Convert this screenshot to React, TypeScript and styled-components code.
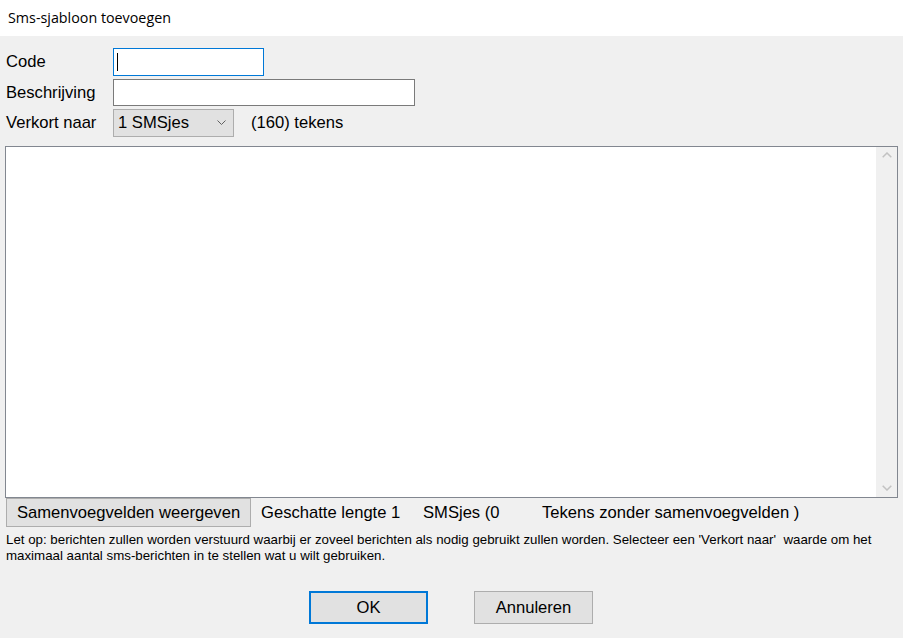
import React from "react";
import styled, { createGlobalStyle } from "styled-components";

const Global = createGlobalStyle`
  html, body { margin: 0; padding: 0; background: #f0f0f0; }
  body { font-family: "Liberation Sans", Arial, sans-serif; color: #000; }
  * { box-sizing: border-box; }
`;

const Window = styled.div`
  width: 903px;
  height: 638px;
  display: flex;
  flex-direction: column;
  background: #f0f0f0;
  overflow: hidden;
`;

const TitleBar = styled.div`
  height: 36px;
  flex: none;
  background: #fff;
  display: flex;
  align-items: center;
  padding-left: 8px;
  padding-bottom: 1px;
  font-family: "Open Sans", "Noto Sans", sans-serif;
  font-size: 14.3px;
  color: #000;
`;

const Body = styled.div`
  flex: 1;
  display: flex;
  flex-direction: column;
  padding: 12px 5px 0 5px;
`;

const FormGrid = styled.div`
  display: grid;
  grid-template-columns: 108px auto;
  row-gap: 3px;
  align-items: center;
`;

const Label = styled.label`
  font-size: 16.6px;
  padding-left: 1px;
`;

const TextInput = styled.div<{ $w: number; $focused?: boolean; $h: number }>`
  width: ${(p) => p.$w}px;
  height: ${(p) => p.$h}px;
  background: #fff;
  border: 1px solid ${(p) => (p.$focused ? "#0078d7" : "#7a7a7a")};
  display: flex;
  align-items: center;
  padding-left: 3px;
`;

const Caret = styled.span`
  width: 1px;
  height: 18px;
  background: #000;
`;

const SelectRow = styled.div`
  display: flex;
  align-items: center;
  gap: 17px;
`;

const Select = styled.div`
  width: 121px;
  height: 28px;
  background: #e1e1e1;
  border: 1px solid #adadad;
  display: flex;
  align-items: center;
  justify-content: space-between;
  padding: 0 7px 0 4px;
  font-size: 16.6px;
`;

const Chevron = styled.svg`
  width: 9px;
  height: 6px;
`;

const PlainText = styled.span`
  font-size: 16.6px;
`;

const MessageBox = styled.div`
  margin-top: 9px;
  height: 352px;
  width: 893px;
  background: #fff;
  border: 1px solid #828790;
  display: flex;
  justify-content: flex-end;
`;

const ScrollBar = styled.div`
  width: 21px;
  background: #f0f0f0;
  display: flex;
  flex-direction: column;
  justify-content: space-between;
  align-items: center;
  padding: 5px 0 6px 1px;
`;

const Arrow = styled.svg`
  width: 10px;
  height: 6px;
`;

const StatusRow = styled.div`
  display: flex;
  align-items: center;
  height: 29px;
  font-size: 16.6px;
`;

const Button = styled.button<{ $w: number; $h: number; $primary?: boolean }>`
  width: ${(p) => p.$w}px;
  height: ${(p) => p.$h}px;
  flex: none;
  background: #e1e1e1;
  border: ${(p) => (p.$primary ? "2px solid #0078d7" : "1px solid #adadad")};
  font-family: "Liberation Sans", Arial, sans-serif;
  font-size: 16.6px;
  color: #000;
  padding: 0;
  margin: 0;
  display: flex;
  align-items: center;
  justify-content: center;
`;

const WideButton = styled(Button)`
  margin-left: 1px;
`;

const StatusItem = styled.span<{ $w?: number }>`
  white-space: pre;
  ${(p) => (p.$w ? `width: ${p.$w}px; flex: none;` : "")}
`;

const StatusGroup = styled.div`
  display: flex;
  padding-left: 10px;
`;

const Note = styled.p`
  margin: 5px 0 0 1px;
  font-size: 13.3px;
  line-height: 16px;
  width: 880px;
  white-space: pre-wrap;
`;

const ButtonBar = styled.div`
  display: flex;
  margin-top: 27px;
  padding-left: 304px;
  gap: 46px;
`;

export default function App() {
  return (
    <>
      <Global />
      <Window>
        <TitleBar>Sms-sjabloon toevoegen</TitleBar>
        <Body>
          <FormGrid>
            <Label>Code</Label>
            <TextInput $w={151} $h={28} $focused>
              <Caret />
            </TextInput>
            <Label>Beschrijving</Label>
            <TextInput $w={302} $h={27} />
            <Label>Verkort naar</Label>
            <SelectRow>
              <Select>
                <span>1 SMSjes</span>
                <Chevron viewBox="0 0 9 6">
                  <path d="M0.5 0.5 L4.5 4.5 L8.5 0.5" fill="none" stroke="#606060" strokeWidth="1" />
                </Chevron>
              </Select>
              <PlainText>(160) tekens</PlainText>
            </SelectRow>
          </FormGrid>
          <MessageBox>
            <ScrollBar>
              <Arrow viewBox="0 0 10 6">
                <path d="M0.7 5.3 L5 1 L9.3 5.3" fill="none" stroke="#c2c2c2" strokeWidth="1.5" />
              </Arrow>
              <Arrow viewBox="0 0 10 6">
                <path d="M0.7 0.7 L5 5 L9.3 0.7" fill="none" stroke="#c2c2c2" strokeWidth="1.5" />
              </Arrow>
            </ScrollBar>
          </MessageBox>
          <StatusRow>
            <WideButton $w={245} $h={29}>
              Samenvoegvelden weergeven
            </WideButton>
            <StatusGroup>
              <StatusItem $w={162}>Geschatte lengte 1</StatusItem>
              <StatusItem $w={119}>SMSjes (0</StatusItem>
              <StatusItem>Tekens zonder samenvoegvelden )</StatusItem>
            </StatusGroup>
          </StatusRow>
          <Note>
            {"Let op: berichten zullen worden verstuurd waarbij er zoveel berichten als nodig gebruikt zullen worden. Selecteer een 'Verkort naar'  waarde om het maximaal aantal sms-berichten in te stellen wat u wilt gebruiken."}
          </Note>
          <ButtonBar>
            <Button $w={119} $h={33} $primary>
              OK
            </Button>
            <Button $w={119} $h={33}>
              Annuleren
            </Button>
          </ButtonBar>
        </Body>
      </Window>
    </>
  );
}
